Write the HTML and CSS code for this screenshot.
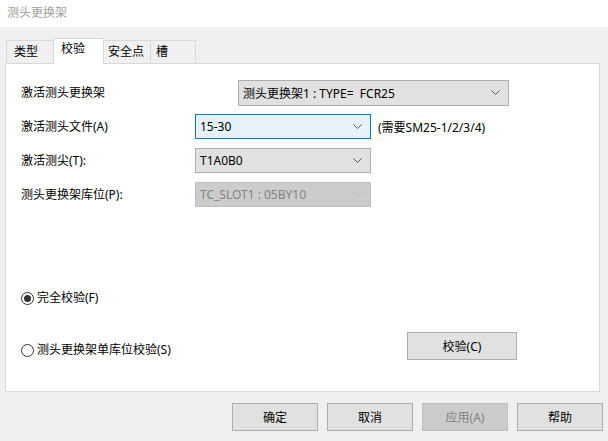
FILE: index.html
```html
<!DOCTYPE html>
<html lang="zh-CN">
<head>
	<meta charset="UTF-8">
	<title>测头更换架</title>
	<link rel="stylesheet" href="styles.css">
</head>
<body>
	<div class="titlebar">测头更换架</div>

	<div class="tabs">
		<div class="tab">类型</div>
		<div class="tab active">校验</div>
		<div class="tab">安全点</div>
		<div class="tab">槽</div>
	</div>

	<div class="panel">
		<div class="form">
			<label class="lbl">激活测头更换架</label>
			<div class="combo wide">
				<span>测头更换架1 : TYPE=&nbsp; FCR25</span>
				<svg class="chev" width="9" height="5" viewBox="0 0 9 5"><polyline points="0.5,0.5 4.5,4.5 8.5,0.5" fill="none" stroke="#555" stroke-width="1"/></svg>
			</div>

			<label class="lbl">激活测头文件(A)</label>
			<div class="ctl">
				<div class="combo focus">
					<span>15-30</span>
					<svg class="chev" width="9" height="5" viewBox="0 0 9 5"><polyline points="0.5,0.5 4.5,4.5 8.5,0.5" fill="none" stroke="#555" stroke-width="1"/></svg>
				</div>
				<span class="note">(需要SM25-1/2/3/4)</span>
			</div>

			<label class="lbl">激活测尖(T):</label>
			<div class="combo">
				<span>T1A0B0</span>
				<svg class="chev" width="9" height="5" viewBox="0 0 9 5"><polyline points="0.5,0.5 4.5,4.5 8.5,0.5" fill="none" stroke="#555" stroke-width="1"/></svg>
			</div>

			<label class="lbl">测头更换架库位(P):</label>
			<div class="combo disabled">
				<span>TC_SLOT1 : 05BY10</span>
				<svg class="chev" width="9" height="5" viewBox="0 0 9 5"><polyline points="0.5,0.5 4.5,4.5 8.5,0.5" fill="none" stroke="#bbb" stroke-width="1"/></svg>
			</div>
		</div>

		<div class="radios">
			<div class="radio checked"><span class="dot"></span>完全校验(F)</div>
			<div class="radio-row">
				<div class="radio"><span class="dot"></span>测头更换架单库位校验(S)</div>
				<button class="btn check">校验(C)</button>
			</div>
		</div>
	</div>

	<div class="footer">
		<button class="btn">确定</button>
		<button class="btn">取消</button>
		<button class="btn disabled">应用(A)</button>
		<button class="btn">帮助</button>
	</div>
</body>
</html>
```

FILE: styles.css
```css
* {
	margin: 0;
	padding: 0;
	box-sizing: border-box;
}

body {
	width: 608px;
	height: 441px;
	background: #f0f0f0;
	font-family: "Noto Sans", "Noto Sans CJK SC", sans-serif;
	font-size: 12px;
	color: #000;
	overflow: hidden;
}

.titlebar {
	height: 27px;
	background: #fff;
	color: #a0a0a0;
	padding: 5px 0 0 7px;
	line-height: 16px;
}

/* tabs */
.tabs {
	display: flex;
	align-items: flex-end;
	height: 36px;
	padding-left: 6px;
}

.tab {
	height: 23px;
	padding: 2px 0 0 7px;
	border: 1px solid #d9d9d9;
	border-bottom: none;
	border-right: none;
	background: #f0f0f0;
	line-height: 17px;
}

.tab:nth-child(1) { width: 47px; }
.tab:nth-child(2) { width: 51px; }
.tab:nth-child(3) { width: 46px; padding-left: 4px; }
.tab:nth-child(4) { width: 46px; border-right: 1px solid #d9d9d9; padding-left: 5px; }

.tab.active {
	height: 26px;
	background: #fff;
	border-right: 1px solid #d9d9d9;
	margin-bottom: -1px;
	position: relative;
	z-index: 1;
	padding-top: 1px;
}

.tab.active + .tab {
	border-left: none;
}

/* panel */
.panel {
	margin: 0 8px 0 5px;
	height: 329px;
	background: #fff;
	border: 1px solid #d9d9d9;
	padding: 16px 0 0 15px;
}

.form {
	display: grid;
	grid-template-columns: 174px auto;
	grid-auto-rows: 25px;
	row-gap: 9px;
	align-items: center;
}

.lbl {
	line-height: 16px;
}

.ctl {
	display: flex;
	align-items: center;
	gap: 7px;
}

.combo {
	width: 176px;
	height: 25px;
	display: flex;
	align-items: center;
	justify-content: space-between;
	padding: 0 8px 0 4px;
	background: #e1e1e1;
	border: 1px solid #adadad;
	white-space: nowrap;
}

.combo.wide {
	width: 271px;
	margin-left: 43px;
	height: 26px;
}

.combo.focus {
	background: #e5f1fb;
	border-color: #0078d7;
}

.combo.disabled {
	background: #cccccc;
	border-color: #bfbfbf;
	color: #838383;
}

.note {
	white-space: nowrap;
}

/* radio buttons */
.radios {
	margin-top: 83px;
}

.radio {
	display: flex;
	align-items: center;
	gap: 3px;
	line-height: 16px;
}

.dot {
	width: 13px;
	height: 13px;
	border: 1px solid #333;
	border-radius: 50%;
	background: #fff;
	display: flex;
	align-items: center;
	justify-content: center;
}

.radio.checked .dot::after {
	content: "";
	width: 7px;
	height: 7px;
	border-radius: 50%;
	background: #333;
}

.radio-row {
	display: flex;
	align-items: center;
	justify-content: space-between;
	margin-top: 34px;
	padding-right: 82px;
}

/* buttons */
.btn {
	width: 86px;
	height: 28px;
	background: #e1e1e1;
	border: 1px solid #adadad;
	font-family: inherit;
	font-size: 12px;
	color: #000;
}

.btn.check {
	width: 110px;
	margin-top: -8px;
}

.btn.disabled {
	background: #cccccc;
	border-color: #bfbfbf;
	color: #838383;
}

.footer {
	display: flex;
	justify-content: flex-end;
	gap: 9px;
	padding: 11px 5px 0 0;
}
```
